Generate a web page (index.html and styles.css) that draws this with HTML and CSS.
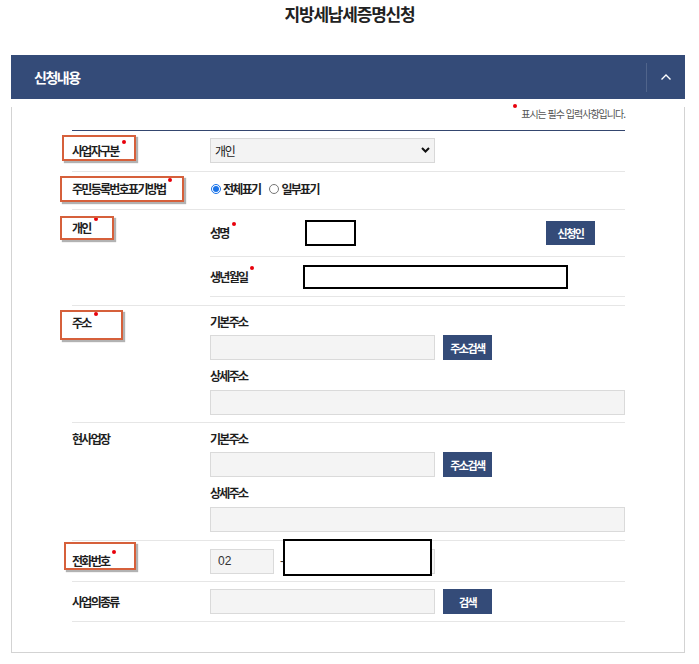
FILE: index.html
```html
<!DOCTYPE html>
<html lang="ko">
<head>
<meta charset="utf-8">
<title>지방세납세증명신청</title>
<link rel="stylesheet" href="styles.css">
</head>
<body>
<h1 class="page-title">지방세납세증명신청</h1>
<section class="panel">
  <div class="panel-head">
    <h2 class="panel-title">신청내용</h2>
    <button class="toggle" type="button" aria-label="접기">
      <svg width="12" height="8" viewBox="0 0 12 8"><polyline points="1.5,6.5 6,2 10.5,6.5" fill="none" stroke="#fff" stroke-width="1.4"/></svg>
    </button>
  </div>
  <div class="panel-body">
    <p class="req-note"><i class="dot note-dot"></i>표시는 필수 입력사항입니다.</p>
    <div class="form">
      <div class="row r1">
        <div class="th"><span class="lbl">사업자구분<i class="dot"></i></span><span class="anno a1"></span></div>
        <div class="td">
          <div class="select-wrap">
            <select class="select"><option>개인</option></select>
            <svg class="select-arrow" width="9" height="6" viewBox="0 0 9 6"><polyline points="1,1 4.5,4.5 8,1" fill="none" stroke="#111" stroke-width="2"/></svg>
          </div>
        </div>
      </div>
      <div class="row r2">
        <div class="th"><span class="lbl">주민등록번호표기방법<i class="dot"></i></span><span class="anno a2"></span></div>
        <div class="td">
          <label class="radio first"><input type="radio" name="rrn" checked>전체표기</label>
          <label class="radio"><input type="radio" name="rrn">일부표기</label>
        </div>
      </div>
      <div class="row r3">
        <div class="th"><span class="lbl">개인<i class="dot"></i></span><span class="anno a3"></span></div>
        <div class="td">
          <div class="sub s1">
            <span class="k">성명<i class="dot"></i></span>
            <input class="redact name" type="text">
            <button class="btn btn-applicant" type="button">신청인</button>
          </div>
          <div class="sub s2">
            <span class="k">생년월일<i class="dot"></i></span>
            <input class="redact birth" type="text">
          </div>
        </div>
      </div>
      <div class="row r4">
        <div class="th"><span class="lbl">주소<i class="dot"></i></span><span class="anno a4"></span></div>
        <div class="td">
          <div class="sublbl">기본주소</div>
          <div class="line"><input class="field half" type="text"><button class="btn" type="button">주소검색</button></div>
          <div class="sublbl gap">상세주소</div>
          <div class="line"><input class="field full" type="text"></div>
        </div>
      </div>
      <div class="row r5">
        <div class="th"><span class="lbl">현사업장</span></div>
        <div class="td">
          <div class="sublbl">기본주소</div>
          <div class="line"><input class="field half" type="text"><button class="btn" type="button">주소검색</button></div>
          <div class="sublbl gap">상세주소</div>
          <div class="line"><input class="field full" type="text"></div>
        </div>
      </div>
      <div class="row r6">
        <div class="th"><span class="lbl">전화번호<i class="dot"></i></span><span class="anno a6"></span></div>
        <div class="td">
          <input class="field tel1" type="text" value="02">
          <span class="dash">-</span>
          <input class="field tel2" type="text">
          <span class="redact-box"></span>
        </div>
      </div>
      <div class="row r7">
        <div class="th"><span class="lbl">사업의종류</span></div>
        <div class="td">
          <input class="field half" type="text"><button class="btn" type="button">검색</button>
        </div>
      </div>
    </div>
  </div>
</section>
</body>
</html>
```

FILE: styles.css
```css
html, body {
  margin: 0;
  padding: 0;
  background: #fff;
}
body {
  font-family: "Noto Sans CJK KR", "Noto Sans", sans-serif;
  color: #222;
  width: 699px;
}
input, select, button {
  font-family: inherit;
  box-sizing: border-box;
}

.page-title {
  margin: 0;
  padding-top: 3px;
  line-height: 22px;
  font-size: 17px;
  font-weight: 700;
  letter-spacing: -1.2px;
  text-align: center;
  color: #222;
}

.panel {
  margin: 30px 0 0 11px;
  width: 674px;
}
.panel-head {
  height: 44px;
  background: #344b78;
  display: flex;
  align-items: center;
  justify-content: space-between;
}
.panel-title {
  margin: 0;
  padding-left: 23px;
  font-size: 14px;
  font-weight: 700;
  letter-spacing: -1.5px;
  color: #fff;
  line-height: 16px;
}
.toggle {
  width: 39px;
  height: 29px;
  border: 0;
  border-left: 1px solid rgba(255,255,255,0.14);
  background: transparent;
  padding: 0;
  display: flex;
  align-items: center;
  justify-content: center;
}

.panel-body {
  border: 1px solid #d3d3d3;
  border-top: 0;
  padding: 0 59px 30px 60px;
}
.req-note {
  margin: 8px 0 9px;
  text-align: right;
  font-size: 10px;
  line-height: 14px;
  letter-spacing: -1px;
  color: #555;
}
.dot {
  display: inline-block;
  width: 4px;
  height: 4px;
  border-radius: 50%;
  background: #e8000b;
  vertical-align: top;
  position: relative;
  top: -4px;
  margin-left: 3px;
}
.note-dot {
  margin: 0 4px 0 0;
  top: -3px;
}

.form {
  border-top: 1px solid #34466f;
}
.row {
  display: grid;
  grid-template-columns: 138px 1fr;
  border-bottom: 1px solid #e6e6e6;
}
.th {
  position: relative;
  font-size: 12px;
  font-weight: 700;
  letter-spacing: -1.7px;
  line-height: 14px;
  color: #1e1e1e;
}
.td {
  position: relative;
  font-size: 12px;
  line-height: 14px;
}

.anno {
  position: absolute;
  box-sizing: border-box;
  border: 2.5px solid #d6603b;
  box-shadow: 2px 2px 1px rgba(0,0,0,0.3);
  pointer-events: none;
}
.a1 { left: -10px; top: 4px; width: 74px; height: 26px; }
.a2 { left: -12px; top: 4px; width: 124px; height: 26px; }
.a3 { left: -12px; top: 6px; width: 54px; height: 24px; }
.a4 { left: -12px; top: 4px; width: 63px; height: 30px; }
.a6 { left: -8px; top: 1px; width: 72px; height: 28px; }

/* row 1 */
.r1 { height: 40px; }
.r1 .th { display: flex; align-items: center; }
.r1 .td { padding-top: 7px; }
.select-wrap {
  position: relative;
  width: 225px;
  height: 25px;
}
.select {
  appearance: none;
  -webkit-appearance: none;
  width: 100%;
  height: 100%;
  margin: 0;
  border: 1px solid #d8d8d8;
  background: #f3f3f3;
  padding: 0 0 0 4px;
  font-size: 12px;
  letter-spacing: -1.3px;
  color: #222;
}
.select-arrow {
  position: absolute;
  right: 5px;
  top: 9px;
}

/* row 2 */
.r2 { height: 37px; }
.r2 .th, .r2 .td {
  display: flex;
  align-items: center;
  padding-bottom: 3px;
}
.radio {
  display: inline-flex;
  align-items: center;
  font-weight: 700;
  font-size: 12px;
  letter-spacing: -1.7px;
  color: #1e1e1e;
}
.radio.first { margin-right: 9px; margin-left: 1px; }
.radio input {
  width: 10px;
  height: 10px;
  margin: 0 2px 0 0;
  accent-color: #1a73e8;
}

/* row 3 */
.r3 .th { padding-top: 11px; }
.r3 .td { padding-bottom: 8px; }
.sub {
  display: flex;
  align-items: center;
  border-bottom: 1px solid #e6e6e6;
}
.s1 { height: 46px; }
.s2 { height: 39px; }
.k {
  width: 95px;
  font-weight: 700;
  letter-spacing: -1.7px;
  color: #1e1e1e;
}
.redact {
  border: 2px solid #000;
  background: #fff;
  margin: 0;
  padding: 0;
}
.redact.name { width: 51px; height: 26px; }
.redact.birth { width: 265px; height: 24px; margin-left: -2px; }
.btn {
  width: 49px;
  height: 25px;
  border: 0;
  background: #344b78;
  color: #fff;
  font-size: 11px;
  font-weight: 700;
  letter-spacing: -1.5px;
  padding: 0;
  margin: 0 0 0 8px;
}
.btn-applicant {
  margin: 0 30px 0 auto;
  height: 24px;
}

/* rows 4,5 */
.r4 .th { padding-top: 10px; }
.r4 .td { padding: 9px 0 7px; }
.r5 .th { padding-top: 9px; }
.r5 .td { padding: 9px 0 8px; }
.sublbl {
  font-weight: 700;
  letter-spacing: -1.7px;
  color: #1e1e1e;
  margin-bottom: 6px;
}
.sublbl.gap {
  margin-top: 9px;
  margin-bottom: 7px;
}
.line {
  display: flex;
  align-items: center;
}
.field {
  height: 25px;
  border: 1px solid #dadada;
  background: #f4f4f4;
  margin: 0;
  padding: 0 7px;
  font-family: "Liberation Sans", sans-serif;
  font-size: 12px;
  color: #333;
}
.field.half { width: 225px; }
.field.full { width: 415px; }

/* row 6 */
.r6 { height: 40px; }
.r6 .th { display: flex; align-items: center; }
.r6 .td { display: flex; align-items: center; }
.field.tel1 { width: 64px; }
.dash {
  width: 16px;
  text-align: center;
  font-family: "Liberation Sans", sans-serif;
  font-size: 12px;
  color: #333;
}
.field.tel2 { width: 145px; }
.redact-box {
  position: absolute;
  left: 73px;
  top: -2px;
  width: 149px;
  height: 37px;
  box-sizing: border-box;
  border: 2.5px solid #000;
  background: #fff;
}

/* row 7 */
.r7 { height: 39px; }
.r7 .th, .r7 .td { display: flex; align-items: center; }
```
